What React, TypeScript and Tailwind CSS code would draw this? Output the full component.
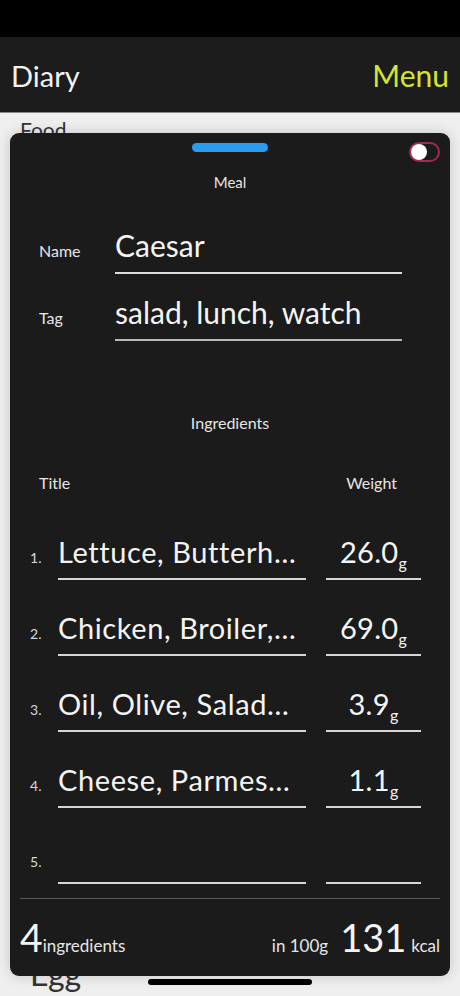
import React from "react";

const font = { fontFamily: "Lato, 'Noto Sans', sans-serif" };

type Row = { n: number; title: string; w: string };
const rows: Row[] = [
  { n: 1, title: "Lettuce, Butterh…", w: "26.0" },
  { n: 2, title: "Chicken, Broiler,…", w: "69.0" },
  { n: 3, title: "Oil, Olive, Salad…", w: "3.9" },
  { n: 4, title: "Cheese, Parmes…", w: "1.1" },
  { n: 5, title: "", w: "" },
];

export default function App() {
  return (
    <div className="relative w-[460px] h-[996px] overflow-hidden bg-[#efefef]" style={font}>
      <div className="h-[37px] bg-black" />
      <div className="h-[76px] bg-[#1c1c1c] flex items-center justify-between px-[11px] border-b border-[#8a8a8a]">
        <span className="text-[29px] leading-none text-[#f2f2f2] mt-[1px]">Diary</span>
        <span className="text-[30px] leading-none text-[#d3e62f] mt-[1px]">Menu</span>
      </div>
      <div className="pl-[20px] pt-[6px] text-[21px] leading-none text-[#333]">Food</div>
      <div className="absolute left-[30px] top-[958px] text-[32px] leading-none text-[#333]">Egg</div>

      <div className="absolute left-[10px] top-[133px] w-[440px] h-[843px] rounded-[9px] bg-[#1b1b1b] shadow-[0_0_14px_rgba(0,0,0,0.18)] flex flex-col">
        <div className="mt-[10px] mx-auto w-[76px] h-[9px] rounded-full bg-[#2a9bef]" />
        <div className="absolute right-[10px] top-[9px] w-[31px] h-[20px] rounded-full border-2 border-[#a32a52] bg-[#1b1b1b] flex items-center">
          <div className="w-[16px] h-[16px] rounded-full bg-white" />
        </div>
        <div className="mt-[20px] text-center text-[15px] leading-[20px] text-[#e6e6e6]">Meal</div>

        <div className="mt-[35px] flex items-baseline pl-[29px]">
          <span className="w-[76px] text-[16px] text-[#e6e6e6]">Name</span>
          <div className="w-[287px] border-b-2 border-[#dcdcdc] pb-[9px] text-[30px] leading-[36px] text-[#f4f4f4]">Caesar</div>
        </div>
        <div className="mt-[20px] flex items-baseline pl-[29px]">
          <span className="w-[76px] text-[16px] text-[#e6e6e6]">Tag</span>
          <div className="w-[287px] border-b-2 border-[#b8b8b8] pb-[9px] text-[30px] leading-[36px] text-[#f4f4f4] whitespace-nowrap">salad, lunch, watch</div>
        </div>

        <div className="mt-[72px] text-center text-[16px] leading-[20px] text-[#e6e6e6]">Ingredients</div>
        <div className="mt-[40px] flex justify-between pl-[29px] pr-[53px] text-[16px] leading-[20px] text-[#e6e6e6]">
          <span>Title</span>
          <span>Weight</span>
        </div>

        <div className="mt-[42px] flex flex-col gap-[31px] pl-[20px]">
          {rows.map((r) => (
            <div key={r.n} className="flex items-baseline">
              <span className="w-[28px] text-[14px] text-[#d8d8d8]">{r.n}.</span>
              <div className="w-[248px] border-b-2 border-[#d6d6d6] pb-[9px] text-[29px] leading-[34px] tracking-[0.6px] text-[#f4f4f4] whitespace-nowrap overflow-hidden">
                {r.title || "\u00a0"}
              </div>
              <div className="ml-[20px] w-[95px] border-b-2 border-[#d6d6d6] pb-[9px] text-[29px] leading-[34px] tracking-[0.3px] text-[#f4f4f4] text-center whitespace-nowrap">
                {r.w ? (
                  <>
                    {r.w}
                    <span className="text-[16px] leading-none relative top-[6px]">g</span>
                  </>
                ) : (
                  "\u00a0"
                )}
              </div>
            </div>
          ))}
        </div>

        <div className="mt-[14px] mx-[10px] h-[1px] bg-[#5a5a5a]" />

        <div className="mt-[19px] flex items-baseline justify-between px-[10px] text-[#f4f4f4]">
          <div className="flex items-baseline">
            <span className="text-[39px] leading-none">4</span>
            <span className="text-[17px] leading-none text-[#e6e6e6]">ingredients</span>
          </div>
          <div className="flex items-baseline">
            <span className="text-[17px] leading-none text-[#e6e6e6]">in 100g</span>
            <span className="ml-[12px] text-[38px] leading-none">131</span>
            <span className="ml-[5px] text-[17px] leading-none text-[#e6e6e6]">kcal</span>
          </div>
        </div>
      </div>

      <div className="absolute left-[148px] top-[979px] w-[164px] h-[6px] rounded-full bg-black" />
    </div>
  );
}
